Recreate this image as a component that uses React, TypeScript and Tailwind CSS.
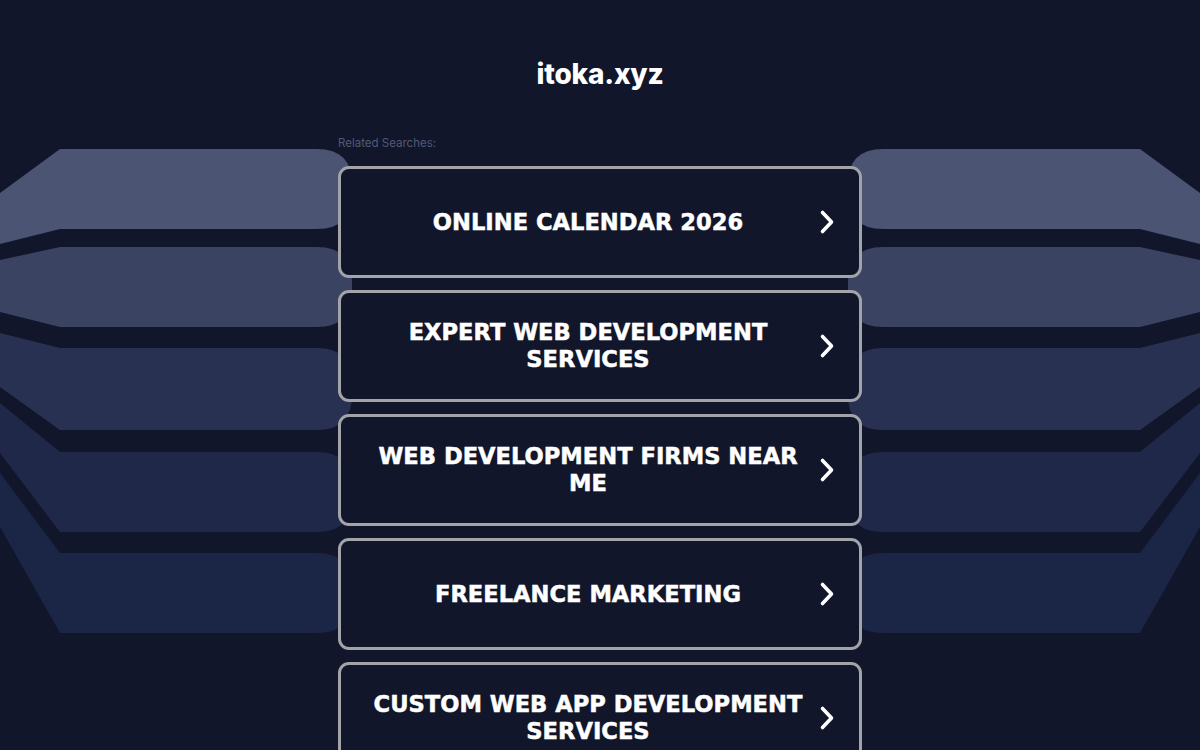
import React from "react";

const items = [
  "ONLINE CALENDAR 2026",
  "EXPERT WEB DEVELOPMENT SERVICES",
  "WEB DEVELOPMENT FIRMS NEAR ME",
  "FREELANCE MARKETING",
  "CUSTOM WEB APP DEVELOPMENT SERVICES",
];

type Band = { a: number; t: number; b: number; c: number; color: string };

const bands: Band[] = [
  { a: 193, t: 149, b: 229, c: 244, color: "#4b5473" },
  { a: 260, t: 247, b: 327, c: 312, color: "#3b4363" },
  { a: 333, t: 348, b: 430, c: 387, color: "#293152" },
  { a: 403, t: 452, b: 532, c: 453, color: "#1f2849" },
  { a: 473, t: 553, b: 633, c: 527, color: "#1b2546" },
];

function bandPath(bd: Band) {
  const r = 35;
  const e = 352;
  return `M0,${bd.a} L60,${bd.t} L${e - r},${bd.t} Q${e},${bd.t} ${e},${bd.t + r} L${e},${bd.b - r} Q${e},${bd.b} ${e - r},${bd.b} L60,${bd.b} L0,${bd.c} Z`;
}

function Background() {
  return (
    <svg
      className="absolute left-0 top-0 w-[1200px] h-[750px]"
      viewBox="0 0 1200 750"
      aria-hidden="true"
    >
      <g>
        {bands.map((bd, i) => (
          <path key={"l" + i} d={bandPath(bd)} fill={bd.color} />
        ))}
      </g>
      <g transform="matrix(-1 0 0 1 1200 0)">
        {bands.map((bd, i) => (
          <path key={"r" + i} d={bandPath(bd)} fill={bd.color} />
        ))}
      </g>
    </svg>
  );
}

function Chevron() {
  return (
    <svg width="20" height="28" viewBox="0 0 20 28" fill="none">
      <path
        d="M5.5 4.5 L14.5 14 L5.5 23.5"
        stroke="#ffffff"
        strokeWidth="3.6"
        strokeLinecap="round"
        strokeLinejoin="round"
      />
    </svg>
  );
}

export default function App() {
  return (
    <div className="relative w-full h-[750px] overflow-hidden bg-[#11162a]">
      <Background />
      <div className="relative flex flex-col items-center pt-[57px]">
        <h1
          className="text-[28px] leading-[34px] font-extrabold text-white tracking-[-0.2px]"
          style={{ fontFamily: "Inter, 'Noto Sans', sans-serif" }}
        >
          itoka.xyz
        </h1>
        <div className="w-[524px] mt-[45px]">
          <div
            className="text-[11.5px] leading-[14px] text-[#515a76]"
            style={{ fontFamily: "Inter, 'Noto Sans', sans-serif" }}
          >
            Related Searches:
          </div>
          <div className="mt-[16px] flex flex-col gap-[12px]">
            {items.map((t) => (
              <a
                key={t}
                href="#"
                className="flex items-center h-[112px] rounded-[11px] border-[3px] border-[#a3a3aa] bg-[#11162b] pl-[27px] pr-[13px]"
              >
                <span
                  className="flex-1 text-center text-white font-bold text-[22.6px] leading-[27px] [-webkit-text-stroke:0.5px_white]"
                  style={{ fontFamily: "'DejaVu Sans', Verdana, sans-serif" }}
                >
                  {t}
                </span>
                <span className="w-[38px] flex justify-center">
                  <Chevron />
                </span>
              </a>
            ))}
          </div>
        </div>
      </div>
    </div>
  );
}
